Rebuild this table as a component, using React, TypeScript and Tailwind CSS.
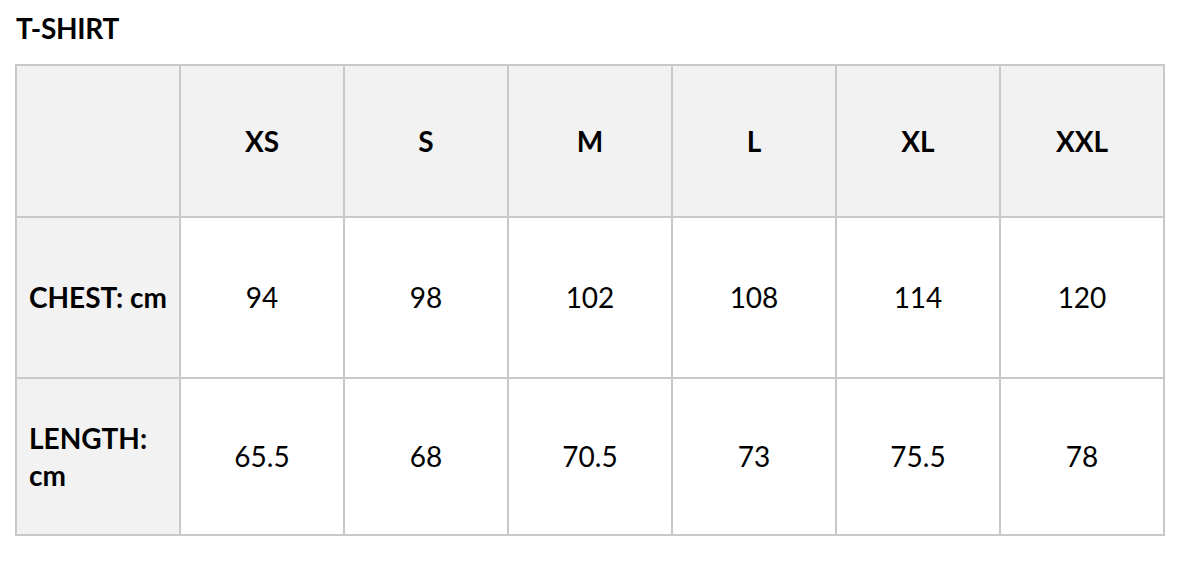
import React from "react";

const sizes = ["XS", "S", "M", "L", "XL", "XXL"];
const rows: { label: React.ReactNode; values: string[] }[] = [
  { label: "CHEST: cm", values: ["94", "98", "102", "108", "114", "120"] },
  { label: "LENGTH: cm", values: ["65.5", "68", "70.5", "73", "75.5", "78"] },
];

export default function App() {
  return (
    <div
      className="min-h-[562px] w-[1190px] bg-white text-black"
      style={{ fontFamily: "Lato, 'Open Sans', sans-serif" }}
    >
      <div className="pl-[16px] pt-[12px]">
        <h1 className="text-[28px] font-bold leading-[32px] tracking-[-0.3px]">T-SHIRT</h1>
      </div>
      <div className="ml-[15px] mt-[20px] grid w-[1150px] grid-cols-[repeat(7,162px)] grid-rows-[150px_159px_155px] gap-[2px] bg-[#c9c9c9] p-[2px] text-[28px] leading-[37px]">
        <div className="bg-[#f2f2f2]" />
        {sizes.map((s) => (
          <div key={s} className="flex items-center justify-center bg-[#f2f2f2] font-bold">
            {s}
          </div>
        ))}
        {rows.map((r, i) => (
          <React.Fragment key={i}>
            <div className="flex items-center bg-[#f2f2f2] pl-[12px] pr-[8px] font-bold">{r.label}</div>
            {r.values.map((v, j) => (
              <div key={j} className="flex items-center justify-center bg-white">
                {v}
              </div>
            ))}
          </React.Fragment>
        ))}
      </div>
    </div>
  );
}
